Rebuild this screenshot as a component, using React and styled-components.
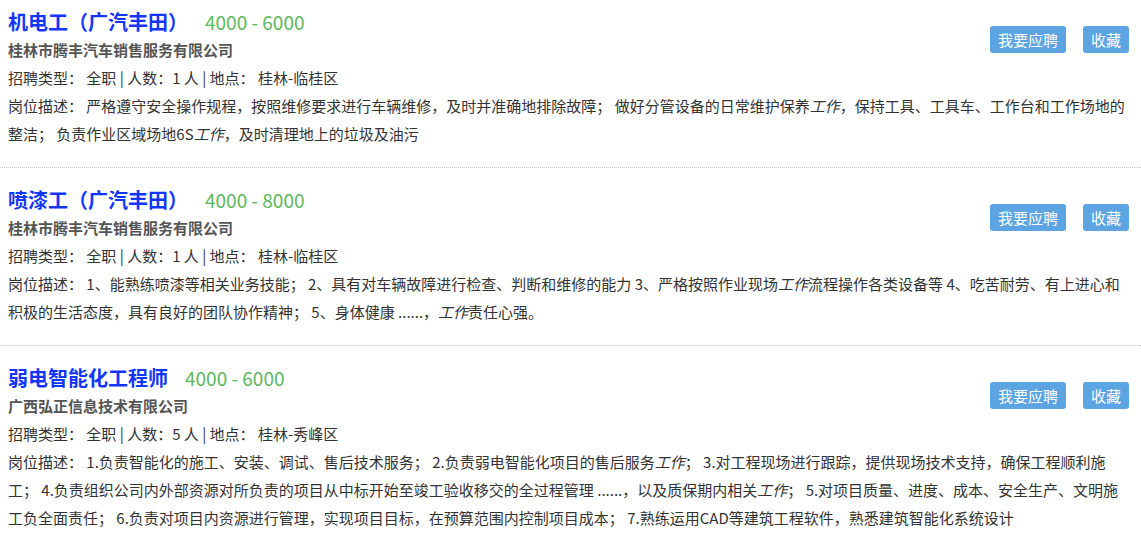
import React from 'react';
import styled, { createGlobalStyle } from 'styled-components';

const GlobalStyle = createGlobalStyle`
  html, body {
    margin: 0;
    padding: 0;
    background: #fff;
    overflow: hidden;
  }
  body {
    font-family: "Noto Sans CJK SC", "Noto Sans", sans-serif;
    color: #333;
  }
`;

const List = styled.div`
  width: 1141px;
`;

const Item = styled.div`
  padding: 18px 11px 19px 8px;
  border-bottom: 1px dotted #c8c8c8;

  &:first-child {
    padding-top: 8px;
  }

  &:last-child {
    border-bottom: none;
  }
`;

const Top = styled.div`
  display: flex;
  justify-content: space-between;
  align-items: flex-start;
`;

const Main = styled.div`
  display: flex;
  flex-direction: column;
`;

const TitleRow = styled.div`
  display: flex;
  align-items: baseline;
  height: 28px;
  line-height: 28px;
`;

const Title = styled.a`
  font-size: 20px;
  font-weight: 700;
  color: #1236fb;
  text-decoration: none;
`;

const Salary = styled.span`
  margin-left: 17px;
  font-size: 19px;
  color: #5cb85c;
`;

const Company = styled.div`
  font-size: 15px;
  line-height: 28px;
  font-weight: 700;
  color: #555;
`;

const Row = styled.div`
  font-size: 15px;
  line-height: 28px;
  color: #333;
  white-space: nowrap;

  em {
    font-style: italic;
  }
`;

const Actions = styled.div`
  display: flex;
  gap: 17px;
  margin-top: 18px;
  margin-right: 1px;
`;

const Button = styled.button`
  height: 27px;
  padding: 0 8px;
  border: none;
  border-radius: 3px;
  background-color: #5ca4e2;
  color: #fff;
  font-family: inherit;
  font-size: 15px;
  line-height: 27px;
  cursor: pointer;
`;

const jobs = [
  {
    title: '机电工（广汽丰田）',
    salary: '4000 - 6000',
    company: '桂林市腾丰汽车销售服务有限公司',
    count: 1,
    place: '桂林-临桂区',
    desc: [
      <>岗位描述： 严格遵守安全操作规程，按照维修要求进行车辆维修，及时并准确地排除故障； 做好分管设备的日常维护保养<em>工作</em>，保持工具、工具车、工作台和工作场地的</>,
      <>整洁； 负责作业区域场地6S<em>工作</em>，及时清理地上的垃圾及油污</>,
    ],
  },
  {
    title: '喷漆工（广汽丰田）',
    salary: '4000 - 8000',
    company: '桂林市腾丰汽车销售服务有限公司',
    count: 1,
    place: '桂林-临桂区',
    desc: [
      <>岗位描述： 1、能熟练喷漆等相关业务技能； 2、具有对车辆故障进行检查、判断和维修的能力 3、严格按照作业现场<em>工作</em>流程操作各类设备等 4、吃苦耐劳、有上进心和</>,
      <>积极的生活态度，具有良好的团队协作精神； 5、身体健康 ......，<em>工作</em>责任心强。</>,
    ],
  },
  {
    title: '弱电智能化工程师',
    salary: '4000 - 6000',
    company: '广西弘正信息技术有限公司',
    count: 5,
    place: '桂林-秀峰区',
    desc: [
      <>岗位描述： 1.负责智能化的施工、安装、调试、售后技术服务； 2.负责弱电智能化项目的售后服务<em>工作</em>； 3.对工程现场进行跟踪，提供现场技术支持，确保工程顺利施</>,
      <>工； 4.负责组织公司内外部资源对所负责的项目从中标开始至竣工验收移交的全过程管理 ......，以及质保期内相关<em>工作</em>； 5.对项目质量、进度、成本、安全生产、文明施</>,
      <>工负全面责任； 6.负责对项目内资源进行管理，实现项目目标，在预算范围内控制项目成本； 7.熟练运用CAD等建筑工程软件，熟悉建筑智能化系统设计</>,
    ],
  },
];

const App = () => {
  return (
    <>
      <GlobalStyle />
      <List>
        {jobs.map((job) => (
          <Item key={job.title}>
            <Top>
              <Main>
                <TitleRow>
                  <Title href="#">{job.title}</Title>
                  <Salary>{job.salary}</Salary>
                </TitleRow>
                <Company>{job.company}</Company>
                <Row>
                  招聘类型： 全职 | 人数：{job.count} 人 | 地点： {job.place}
                </Row>
              </Main>
              <Actions>
                <Button>我要应聘</Button>
                <Button>收藏</Button>
              </Actions>
            </Top>
            {job.desc.map((line, i) => (
              <Row key={i}>{line}</Row>
            ))}
          </Item>
        ))}
      </List>
    </>
  );
};

export default App;
